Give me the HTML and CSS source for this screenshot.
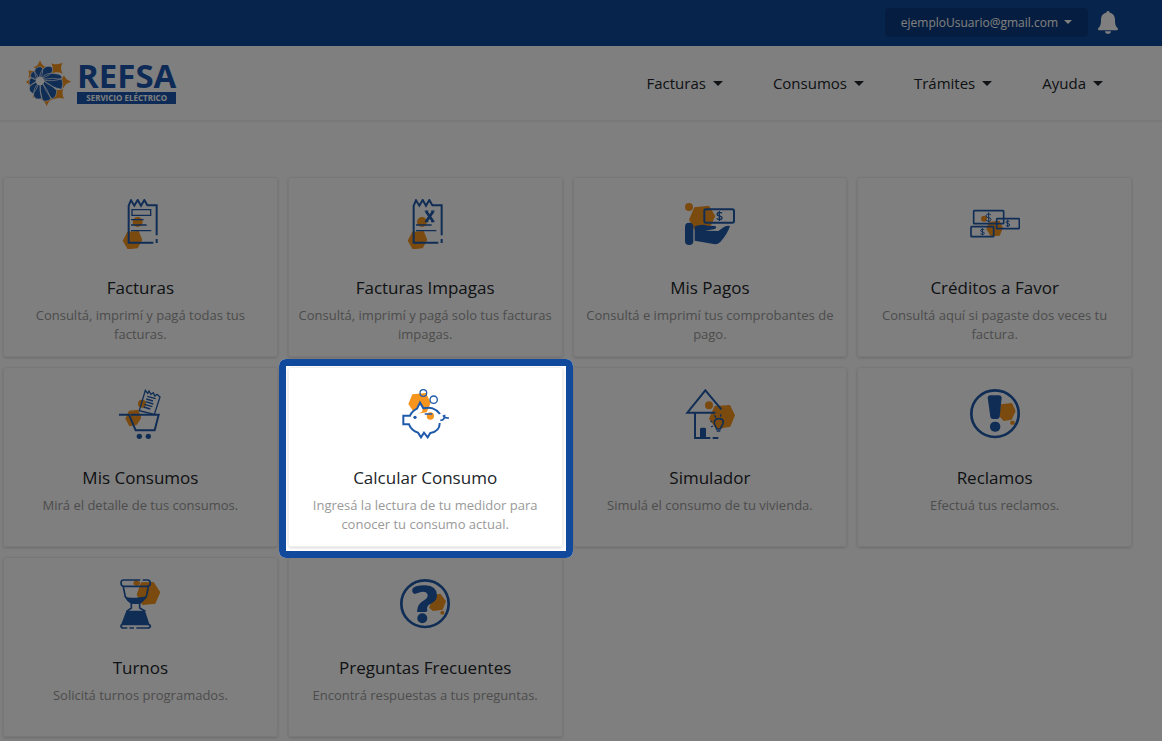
FILE: index.html
```html
<!DOCTYPE html>
<html lang="es">
<head>
<meta charset="utf-8">
<meta name="viewport" content="width=device-width, initial-scale=1">
<title>REFSA Servicio Eléctrico</title>
<link rel="stylesheet" href="styles.css">
</head>
<body>
<header>
  <div class="topbar">
    <button class="account" type="button">ejemploUsuario@gmail.com <span class="caret"></span></button>
    <button class="bell" type="button" aria-label="Notificaciones">
      <svg viewBox="0 0 20 23"><path d="M10 0c1 0 1.500.7 1.500 1.500C15 2.300 17 5 17 9c0 5 1 6.500 2.600 8 .8.900.3 2.200-.9 2.200H1.300C.1 19.200-.4 17.900.4 17 2 15.500 3 14 3 9c0-4 2-6.700 5.500-7.500C8.500.7 9 0 10 0ZM7 20.200h6c0 1.600-1.400 2.600-3 2.600s-3-1-3-2.600Z"/></svg>
    </button>
  </div>
  <div class="navbar">
    <a class="brand" href="#">
      <svg class="brand-mark" viewBox="78 60 138 144">
        <g class="o">
          <path d="M120 62q3 17 18 22q-15 5-18 18q-3-12-20-17q17-6 20-23ZM154 73q13 6 34-2q-10 15 0 33q-18-8-34 0q8-15 0-31ZM214 128q-18 4-24 20q-4-14-18-20q14-6 20-19q5 14 22 19ZM192 179q-17-5-35 3q10-15 3-33q14 8 30 0q-6 14 2 30ZM140 202q-5-17-19-23q14-5 19-19q5 14 18 20q-13 6-18 22ZM98 176q5-12 0-26q12 6 24 0q-5 12 0 23q-11-3-24 3ZM77 129q12-5 16-16q4 12 13 16q-10 5-13 19q-4-14-16-19ZM85 94q11 4 22 0q-3 11 2 22q-11-5-24 0q5-11 0-22Z"/>
        </g>
        <g class="b logo-petals">
          <path d="M111 121q-14-28 0-36q12-5 17 4q3 14-9 31ZM118 117q4-26 20-34q20-5 20 10q0 15-38 26ZM123 118q17-20 43-14q22 2 20 14q-25 12-63 4ZM127 121q30-6 59 0q5 16-1 30q-28-4-58-28ZM128 124q26 12 42 30q0 20-13 26q-19-19-31-52ZM124 127q20 26 29 53q-18 12-26 2q-9-25-7-51ZM121 129q-2 28 4 50q-20 5-24-9q-2-21 15-39ZM117 130q-7 24-18 34q-16-9-9-22q9-12 22-16ZM113 128q-16 6-24 12q-5-17 5-23q10-2 17 6ZM112 124q-18-4-21-12q0-12 10-15q12 8 14 21Z"/>
        </g>
        <circle class="hub" cx="120" cy="126" r="13"/>
      </svg>
      <span class="brand-text"><strong>REFSA</strong><span>SERVICIO ELÉCTRICO</span></span>
    </a>
    <nav class="menu" aria-label="Principal">
      <button type="button">Facturas <span class="caret"></span></button>
      <button type="button">Consumos <span class="caret"></span></button>
      <button type="button">Trámites <span class="caret"></span></button>
      <button type="button">Ayuda <span class="caret"></span></button>
    </nav>
  </div>
</header>

<main class="cards">
  <a class="card" href="#">
    <svg class="icon" viewBox="45 27 150 150">
      <circle class="o" cx="113" cy="96" r="15"/><path class="o" d="M82 125l34-2 11 27-14 25-30 3-15-26Z"/>
      <path class="l" stroke-width="6" d="M160 158H86V47l7-16 10 16 10-17 10 17 10-17 9 16H170V136M170 147v12"/>
      <path class="l" stroke-width="4" d="M96 59h56v17H96ZM93 89h38M93 105h47M93 122h61"/>
    </svg>
    <h2>Facturas</h2><p>Consultá, imprimí y pagá todas tus facturas.</p>
  </a>
  <a class="card" href="#">
    <svg class="icon" viewBox="45 27 150 150">
      <circle class="o" cx="111" cy="96" r="15"/><path class="o" d="M82 125l34-2 11 27-14 25-30 3-15-26Z"/>
      <path class="l" stroke-width="6" d="M160 158H86V47l7-16 10 16 10-17 10 17 10-17 9 16H170V136M170 147v12"/>
      <path class="l" stroke-width="4" d="M93 105h47M93 122h61"/>
      <path class="l" stroke-width="8" d="M123 64l22 31M145 64l-22 31"/><path class="l" stroke-width="3" d="M119 63h11M138 63h11M119 95h11M138 95h11"/>
    </svg>
    <h2>Facturas Impagas</h2><p>Consultá, imprimí y pagá solo tus facturas impagas.</p>
  </a>
  <a class="card" href="#">
    <svg class="icon" viewBox="45 27 150 150">
      <circle class="o" cx="57" cy="51" r="12"/><path class="o" d="M73 52l44-5 19 31-15 32-48 9-16-30Z"/>
      <rect class="l" x="103" y="58" width="89" height="40" rx="5" stroke-width="6"/>
      <path class="l" stroke-width="4" d="M156 70c-4-4-15-4-15 3 0 7 15 3 15 10 0 7-12 7-16 2M148 63v30"/>
      <rect class="b" x="45" y="98" width="25" height="67" rx="12"/>
      <path class="b" d="M74 109q22-8 38-2l24 1q5 6-2 9l-29 5 40 1 17-12q9-5 18-3-8 25-29 48-7 7-16 7l-61-11Z"/>
    </svg>
    <h2>Mis Pagos</h2><p>Consultá e imprimí tus comprobantes de pago.</p>
  </a>
  <a class="card" href="#">
    <svg class="icon" viewBox="45 27 150 150">
      <circle class="o" cx="87" cy="86" r="9"/><path class="o" d="M102 95l32-3 10 22-10 23-27 2-13-22Z"/>
      <g class="l" stroke-width="5"><rect x="56" y="62" width="90" height="39" rx="2"/><rect x="125" y="86" width="68" height="30" rx="2"/><rect x="48" y="110" width="68" height="30" rx="2"/></g>
      <path class="l" stroke-width="3" d="M108 75c-4-4-15-4-15 3 0 7 15 3 15 10 0 7-12 7-16 2M101 67v30M164 95c-4-3-11-3-11 2 0 5 11 2 11 8 0 5-9 4-12 1M158 89v22M88 120c-4-3-11-3-11 2 0 5 11 2 11 8 0 5-9 4-12 1M82 114v22"/>
    </svg>
    <h2>Créditos a Favor</h2><p>Consultá aquí si pagaste dos veces tu factura.</p>
  </a>

  <a class="card" href="#">
    <svg class="icon" viewBox="45 27 150 150">
      <circle class="o" cx="126" cy="71" r="12"/><path class="o" d="M87 92l28-3 9 25-14 21-22 4-12-23Z"/>
      <path class="l" stroke-width="6" d="M57 104h30l20 47h57l12-47H92"/>
      <path class="l" stroke-width="4" d="M118 92l18-61 7 9 4-7 6 10 7-5 4 10 7-5 9 8-17 52ZM142 49l25 7M139 57l20 6M137 65l23 7M133 73l24 7M131 81l20 6"/>
      <circle class="b" cx="118" cy="169" r="8"/><circle class="b" cx="145" cy="169" r="8"/>
    </svg>
    <h2>Mis Consumos</h2><p>Mirá el detalle de tus consumos.</p>
  </a>
  <a class="card card-active" href="#">
    <svg class="icon" viewBox="390 117 150 150">
      <path class="o" d="M427 133l41-4 14 30-12 28-35 5-20-30Z"/><circle class="o" cx="481" cy="198" r="11"/>
      <path class="w" d="M417 195l24-21 9-12 9 13-3 10-14 8Z"/>
      <circle class="l" cx="460" cy="129" r="10" stroke-width="4"/><circle class="l" cx="491" cy="149" r="11" stroke-width="4"/>
      <path class="l" stroke-width="6" d="M510 192q-8-12-22-17-12-4-28 0l-10-17-9 18q-15 7-21 21H400v26h17q7 18 27 25l9 14 9-14 11 14 8-13q29-5 28-30"/>
      <path class="l" stroke-width="5" d="M464 192h23M511 211q13 0 13-17M519 196q5 9 18 8"/><circle class="b" cx="435" cy="202" r="5"/>
    </svg>
    <h2>Calcular Consumo</h2><p>Ingresá la lectura de tu medidor para conocer tu consumo actual.</p>
  </a>
  <a class="card" href="#">
    <svg class="icon" viewBox="45 27 150 150">
      <circle class="o" cx="117" cy="76" r="12"/><path class="o" d="M134 78l46-3 15 31-14 34-42 8-22-32Z"/>
      <path class="l" stroke-width="6" d="M136 98H52l54-67 48 57M75 99v75h46M128 174h17"/>
      <path class="b" d="M90 173v-26q0-4 5-4h8q5 0 5 4v26Z"/>
      <path class="l" stroke-width="5" d="M140 147c0-7-8-10-7-20 1-15 27-15 27 0 0 10-9 13-9 20ZM140 153h11"/>
      <path class="l" stroke-width="4" d="M152 103v7M133 106l5 7M121 123l6 3M123 141l6-3"/>
    </svg>
    <h2>Simulador</h2><p>Simulá el consumo de tu vivienda.</p>
  </a>
  <a class="card" href="#">
    <svg class="icon" viewBox="45 27 150 150">
      <path class="o" d="M137 73l34-4 11 24-12 26-24 4-13-14Z"/><rect class="o" x="166" y="122" width="13" height="12" rx="4"/>
      <ellipse class="l" cx="120" cy="101" rx="71" ry="70" stroke-width="8"/>
      <path class="b" d="M98 53q0-6 7-7h28q7 1 7 7l-6 57q-1 7-8 7h-12q-7 0-8-7Z"/><rect class="b" x="105" y="125" width="31" height="30" rx="14"/>
    </svg>
    <h2>Reclamos</h2><p>Efectuá tus reclamos.</p>
  </a>

  <a class="card" href="#">
    <svg class="icon" viewBox="45 27 150 150">
      <path class="o" d="M123 37l38-1 20 31-15 34-39 4-17-31ZM101 35l7-6 12 7-1 8-10 4-9-5Z"/>
      <path class="l" stroke-width="5" d="M128 30h14q9 0 9 9t-9 10H72q-9 0-9-10t9-9h49M70 51l6 29 18 20v14l-14 10M145 51l-6 29-20 20v14l17 10"/>
      <path class="b" d="M73 79q12 6 34 4t34-4l-10 14-15 9H97l-15-9ZM79 122h56l13 40H64Z"/>
      <path class="l" stroke-width="5" d="M82 174H70q-7 0-7-6 0-5 7-5h72q9 0 9 5 0 6-8 6h-34M88 174h14"/>
    </svg>
    <h2>Turnos</h2><p>Solicitá turnos programados.</p>
  </a>
  <a class="card" href="#">
    <svg class="icon" viewBox="45 27 150 150">
      <path class="o" d="M150 74l16-3 17 23-10 25-29 4-12-10Z"/><circle class="o" cx="172" cy="128" r="6"/>
      <ellipse class="l" cx="120" cy="101" rx="71" ry="70" stroke-width="8"/>
      <path class="b" d="M89 72q-9-3-7-14 3-12 39-12 34 2 35 29 0 17-16 25-15 7-14 17 4 9-6 9H98q-4-2-1-7 1-16 17-26 15-8 14-18-3-12-20-9Z"/><circle class="b" cx="112" cy="145" r="15"/>
    </svg>
    <h2>Preguntas Frecuentes</h2><p>Encontrá respuestas a tus preguntas.</p>
  </a>
</main>
</body>
</html>
```
FILE: styles.css
```css
* { box-sizing: border-box; }

body {
  margin: 0;
  background: #fff;
  color: #212529;
  font-family: "Open Sans", sans-serif;
}

button {
  border: 0;
  background: none;
  color: inherit;
  font: inherit;
}

.caret {
  border: 4px solid transparent;
  border-top-color: currentColor;
  border-bottom: 0;
}

.topbar {
  display: flex;
  justify-content: flex-end;
  align-items: center;
  gap: 10px;
  height: 46px;
  padding: 0 44px 2px;
  background: #0e489a;
  color: #fff;
}

.account {
  display: flex;
  align-items: center;
  gap: 6px;
  height: 29px;
  padding: 0 16px;
  border-radius: 4px;
  background: #0b3b80;
  font-size: 12px;
}

.bell {
  width: 20px;
  padding: 0;
}

.bell svg {
  display: block;
  width: 20px;
  fill: #fff;
}

.navbar {
  display: flex;
  justify-content: space-between;
  align-items: center;
  height: 76px;
  padding: 0 59px 0 26px;
  border-bottom: 2px solid #f2f2f2;
}

.brand {
  display: flex;
  align-items: center;
  gap: 5px;
  color: #1a56ac;
  text-decoration: none;
}

.brand-mark {
  width: 46px;
  height: 48px;
}

.brand-text {
  display: flex;
  flex-direction: column;
  gap: 2px;
}

.brand-text strong {
  font-size: 33px;
  line-height: 28px;
}

.brand-text span {
  background: #1a56ac;
  color: #fff;
  font-size: 8px;
  font-weight: 700;
  line-height: 12px;
  text-align: center;
}

.logo-petals {
  stroke: #fff;
  stroke-width: 2px;
}

.hub,
.w {
  fill: #fff;
}

.menu {
  display: flex;
  gap: 50px;
}

.menu button {
  display: flex;
  align-items: center;
  gap: 7px;
  padding: 0;
  font-size: 15px;
}

.menu .caret {
  border-width: 5px;
  border-bottom: 0;
}

.cards {
  display: grid;
  grid-template-columns: repeat(4, 1fr);
  grid-auto-rows: minmax(180px, auto);
  gap: 10px;
  padding: 55px 30px 4px 3px;
}

.card {
  position: relative;
  display: flex;
  flex-direction: column;
  align-items: center;
  padding: 21px 8px 12px;
  border: 1px solid #f0f0f0;
  border-radius: 3px;
  box-shadow: 0 1px 3px rgba(0, 0, 0, 0.16);
  text-align: center;
  text-decoration: none;
}

.card h2 {
  margin: 27px 0 6px;
  color: #212529;
  font-size: 17px;
  font-weight: 400;
  line-height: 24px;
}

.card p {
  margin: 0;
  color: #999;
  font-size: 13px;
  line-height: 19px;
}

.card-active {
  z-index: 1;
}

/* Frames the current step and dims everything around it */
.card-active::after {
  content: "";
  position: absolute;
  inset: -9px -11px -12px -10px;
  border: 7px solid #11499c;
  border-radius: 7px;
  box-shadow: 0 0 0 9999px rgba(0, 0, 0, 0.5);
  pointer-events: none;
}

.icon {
  width: 50px;
  height: 50px;
}

.o {
  fill: #f7941d;
}

.b {
  fill: #1f5aaa;
}

.l {
  fill: none;
  stroke: #1f5aaa;
}
```
